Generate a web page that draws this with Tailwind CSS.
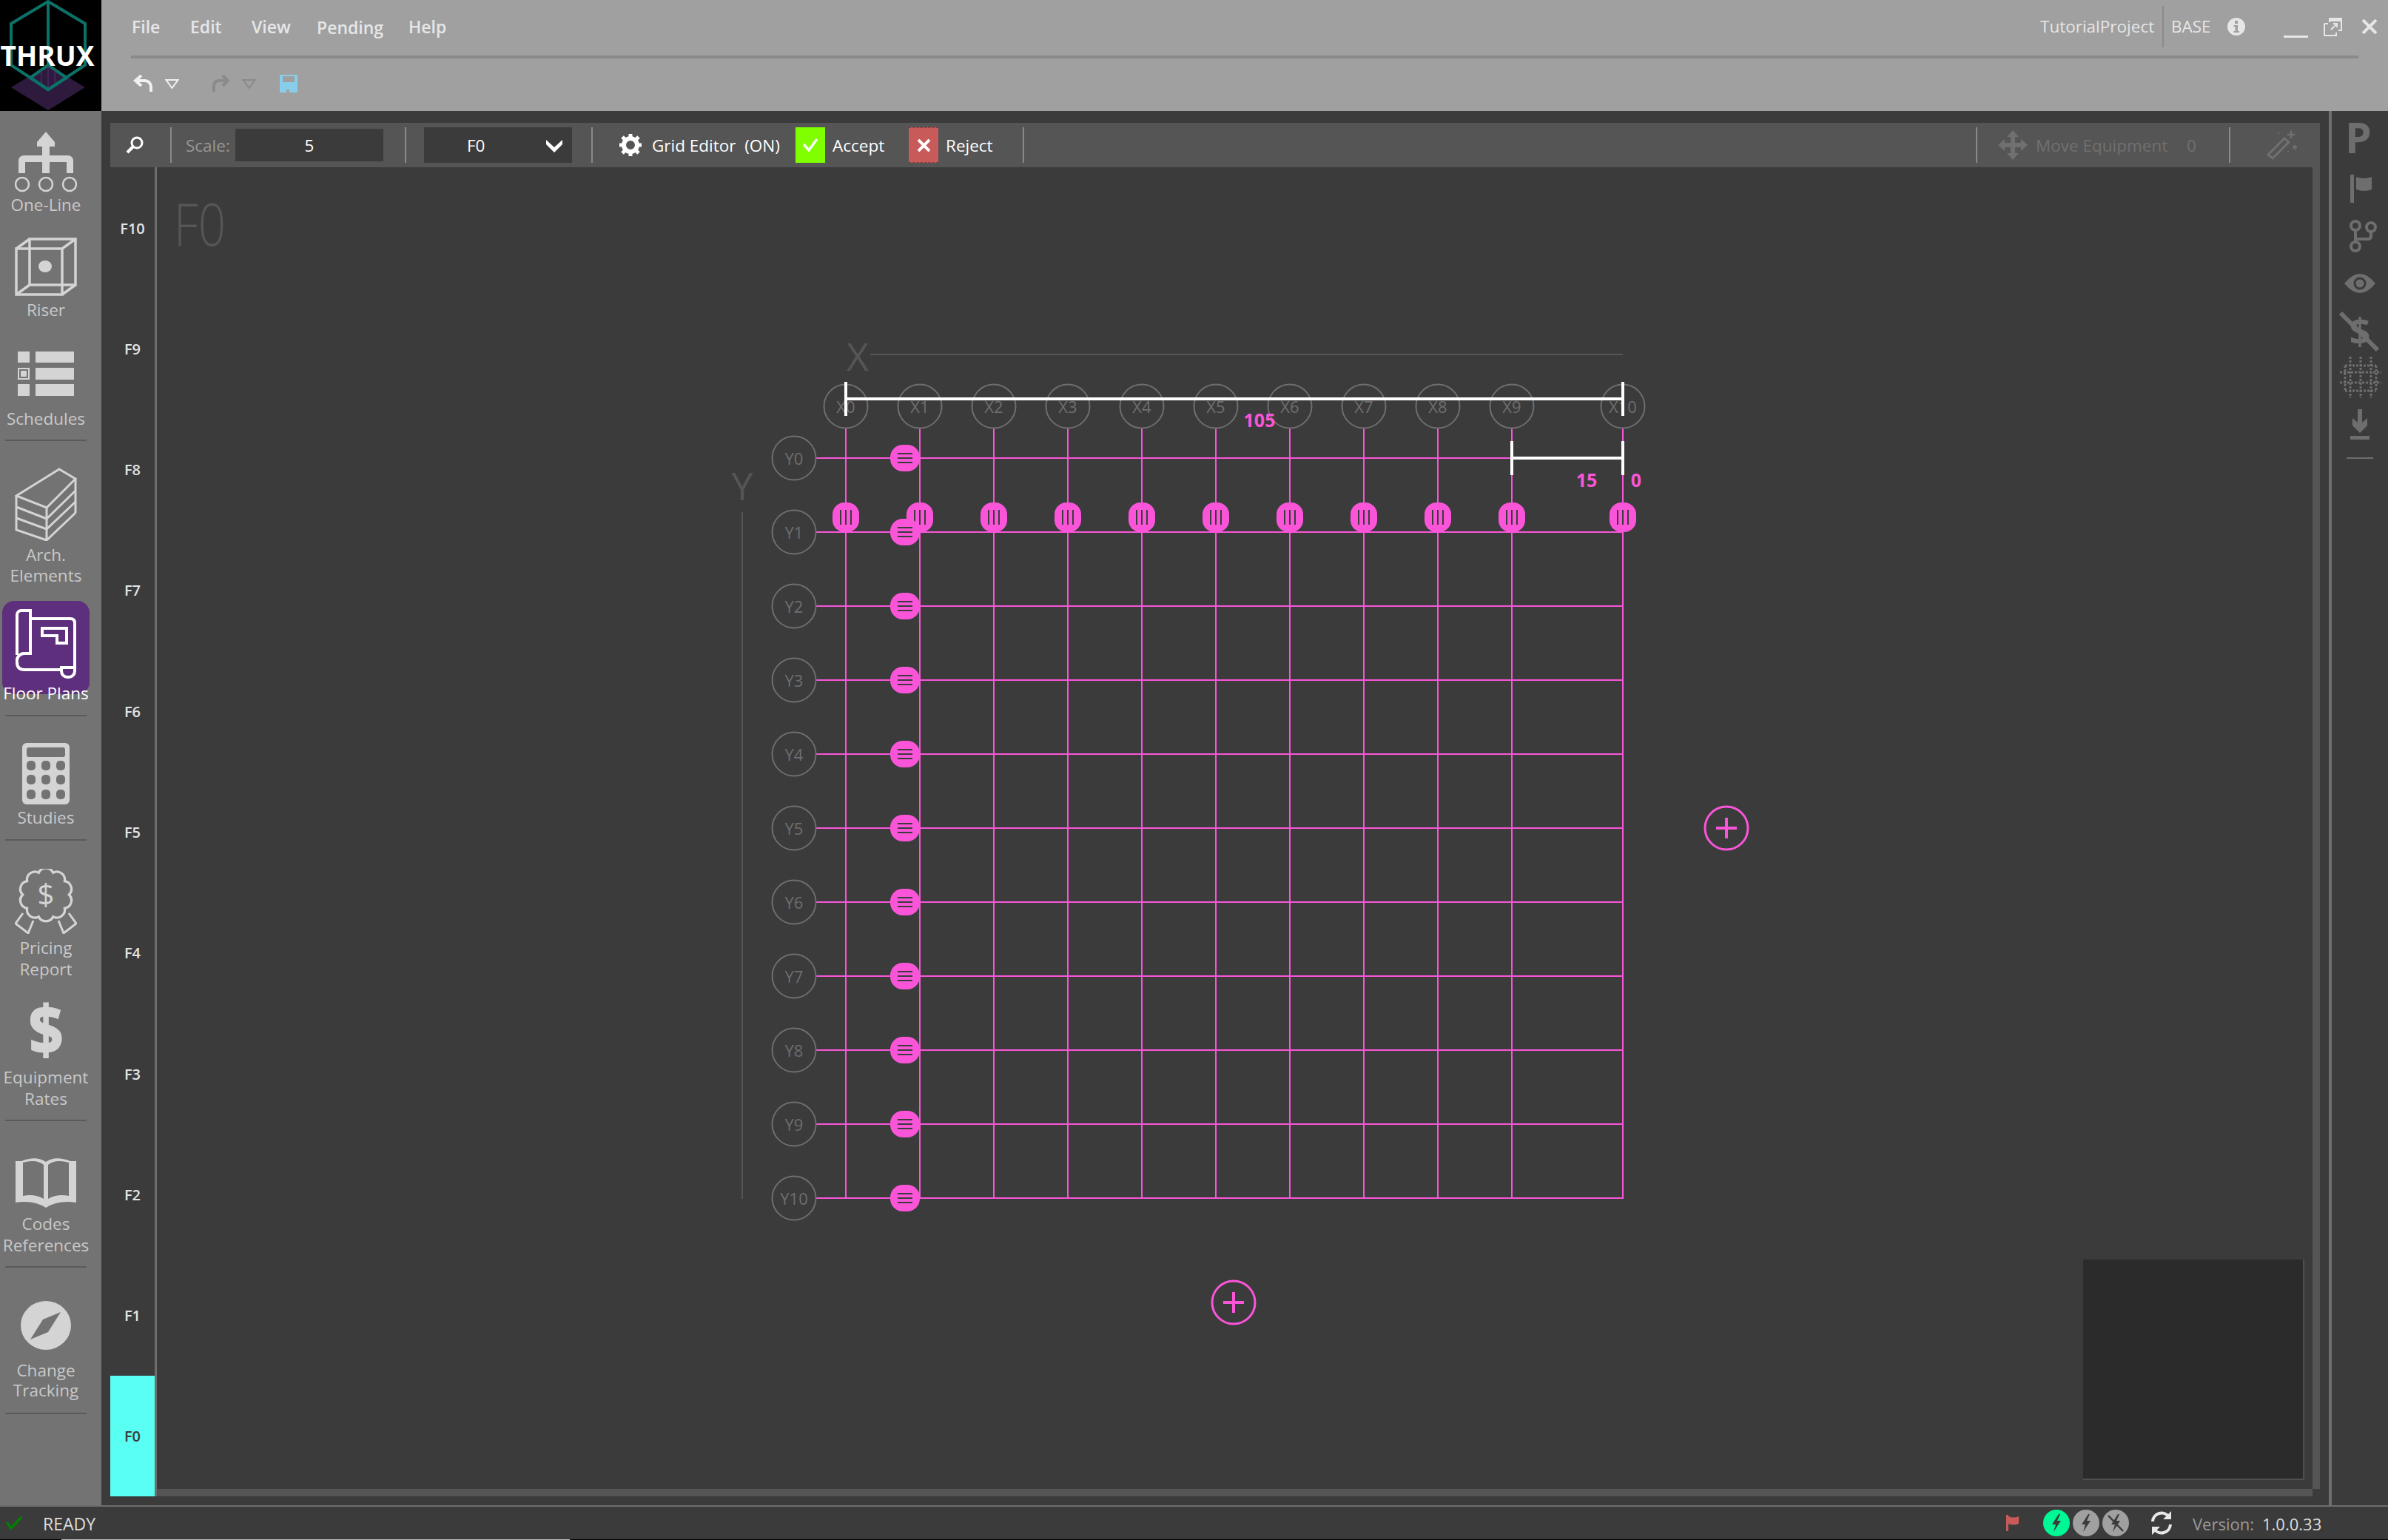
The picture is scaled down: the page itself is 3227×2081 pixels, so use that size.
<!DOCTYPE html>
<html lang="en">

<head>
  <meta charset="UTF-8">
  <title>Thrux - Floor Plans</title>
  <script src="https://cdn.jsdelivr.net/npm/@tailwindcss/browser@4"></script>
</head>

<body class="w-[3227px] h-[2081px] overflow-hidden bg-[#3b3b3b] flex flex-col font-['Open_Sans',sans-serif] text-[22px]">

  <!-- title bar -->
  <header class="h-[150px] flex bg-[#a0a0a0] shrink-0">
    <div class="w-[137px] h-[150px] bg-black relative overflow-hidden shrink-0">
      <svg class="absolute inset-0" width="137" height="150" viewBox="0 0 137 150">
        <polygon points="65,88 115,118 65,149 15,118" fill="#2e1a3d" />
        <g fill="none" stroke="#0b7268" stroke-width="4">
          <polygon points="65,2 115,32 115,88 65,121 15,88 15,32" />
          <line x1="65" y1="2" x2="65" y2="88" />
          <polygon points="65,88 90,105 65,121 41,105" />
        </g>
        <g stroke="#4a2a63" stroke-width="1.5">
          <line x1="56" y1="95" x2="56" y2="112" />
          <line x1="65" y1="90" x2="65" y2="118" />
          <line x1="74" y1="95" x2="74" y2="112" />
        </g>
      </svg>
      <span class="absolute left-0 top-[50px] w-[128px] text-center text-[37px] leading-[50px] font-bold text-white">THRUX</span>
    </div>
    <div class="flex-1 flex flex-col">
      <div class="h-[72px] flex items-center text-[#e6e6e6]">
        <nav class="flex items-center pl-[41px] font-semibold text-[23px]">
          <span class="w-[79px]">File</span>
          <span class="w-[83px]">Edit</span>
          <span class="w-[88px]">View</span>
          <span class="w-[124px] mt-[3px]">Pending</span>
          <span>Help</span>
        </nav>
        <div class="ml-auto flex items-center pr-[14px]">
          <span class="w-[153px] text-[22.5px] whitespace-nowrap">TutorialProject</span>
          <span class="w-[2px] h-[56px] bg-[#8a8a8a] ml-[12px]"></span>
          <span class="w-[53px] ml-[10px] text-[22.5px]">BASE</span>
          <svg class="ml-[23px]" width="24" height="24" viewBox="0 0 24 24">
            <circle cx="12" cy="12" r="12" fill="#e6e6e6" />
            <rect x="10" y="4" width="4" height="4" fill="#a0a0a0" />
            <path d="M8.5 10h5.5v8h2v2H8.5v-2h2v-6h-2z" fill="#a0a0a0" />
          </svg>
          <span class="w-[33px] h-[3px] bg-[#e6e6e6] ml-[52px] mt-[26px]"></span>
          <svg class="ml-[21px]" width="25" height="25" viewBox="0 0 25 25" fill="none" stroke="#e6e6e6" stroke-width="2">
            <path d="M8 1h16v16h-4M8 1v5" />
            <path d="M8 1h16v3H8z" fill="#e6e6e6" />
            <path d="M1 8h5M1 8v16h16v-4M1 8v3" />
            <path d="M10 16l8-8M13 8h5v5" />
          </svg>
          <svg class="ml-[26px]" width="22" height="20" viewBox="0 0 22 20" stroke="#e6e6e6" stroke-width="4">
            <path d="M2 1l18 18M20 1L2 19" />
          </svg>
        </div>
      </div>
      <div class="h-[4px] w-[3010px] ml-[40px] mt-[3px] bg-[#8a8a8a]"></div>
      <div class="flex items-center pl-[43px] mt-[22px]">
        <svg width="27" height="24" viewBox="0 0 27 24" fill="none" stroke="#f0f0f0" stroke-width="4">
          <path d="M4 8h12a8 8 0 0 1 8 8v7" />
          <path d="M11 1L3 8l8 7" />
        </svg>
        <svg class="ml-[16px]" width="19" height="13" viewBox="0 0 19 13" fill="none" stroke="#f0f0f0" stroke-width="2">
          <path d="M1.5 1h16L9.5 12z" />
        </svg>
        <svg class="ml-[45px]" width="23" height="24" viewBox="0 0 23 24" fill="none" stroke="#8a8a8a" stroke-width="4">
          <path d="M20 8H9a7 7 0 0 0-7 8v7" />
          <path d="M14 1l7 7-7 7" />
        </svg>
        <svg class="ml-[17px]" width="19" height="13" viewBox="0 0 19 13" fill="none" stroke="#8a8a8a" stroke-width="2">
          <path d="M1.5 1h16L9.5 12z" />
        </svg>
        <svg class="ml-[32px]" width="24" height="24" viewBox="0 0 24 24">
          <rect width="24" height="24" fill="#87ceeb" />
          <rect x="4" y="2" width="16" height="8" fill="#a0a0a0" />
          <rect x="9" y="20" width="4" height="4" fill="#a0a0a0" />
        </svg>
      </div>
    </div>
  </header>

  <div class="h-[1884px] flex shrink-0">

    <!-- left navigation -->
    <aside class="w-[137px] shrink-0 pr-[13px] bg-[#737373] flex flex-col items-center text-[#c9c9c9] text-[22.5px] text-center leading-[28px]">
      <svg class="mt-[28px] shrink-0" width="84" height="82" viewBox="0 0 84 82" fill="#d4d4d4">
        <path d="M42 0l12 14v6h-7v12h24q8 0 8 8v16H70V41H47v15H37V41H14v15H5V40q0-8 8-8h24V20h-7v-6z" />
        <g fill="none" stroke="#d4d4d4" stroke-width="2.5">
          <circle cx="10" cy="71" r="9" />
          <circle cx="42" cy="71" r="9" />
          <circle cx="74" cy="71" r="9" />
        </g>
      </svg>
      <span class="mt-[3px]">One-Line</span>

      <svg class="mt-[30px] shrink-0" width="84" height="79" viewBox="0 0 84 79" fill="none" stroke="#d4d4d4" stroke-width="3.5">
        <rect x="2" y="15" width="62" height="62" />
        <rect x="20" y="2" width="62" height="62" />
        <path d="M2 15L20 2M64 15L82 2M2 77l18-13M64 77l18-13" />
        <ellipse cx="41" cy="39" rx="9" ry="8" fill="#d4d4d4" stroke="none" />
      </svg>
      <span class="mt-[5px]">Riser</span>

      <svg class="mt-[42px] shrink-0" width="76" height="60" viewBox="0 0 76 60" fill="#d4d4d4">
        <rect width="16" height="15" />
        <rect x="24" width="52" height="15" />
        <rect y="22" width="16" height="16" />
        <rect x="2" y="24" width="12" height="12" fill="#737373" />
        <rect x="4" y="26" width="8" height="8" />
        <rect x="24" y="22" width="52" height="16" />
        <rect y="44" width="16" height="16" />
        <rect x="24" y="44" width="52" height="16" />
      </svg>
      <span class="mt-[17px]">Schedules</span>
      <div class="w-[110px] h-[2px] bg-[#5a5a5a] mt-[14px] shrink-0"></div>

      <svg class="mt-[36px] shrink-0" width="84" height="99" viewBox="0 0 84 99" fill="none" stroke="#d4d4d4" stroke-width="3">
        <path d="M2 38L60 2l22 13-39 39z" />
        <path d="M2 38v46l41 14 39-37" />
        <path d="M2 53l41 16 39-38M2 68l41 15 39-37" />
        <path d="M43 54v44M82 15v16M82 31v15M82 46v15" />
      </svg>
      <span class="mt-[5px]">Arch.<br>Elements</span>

      <div class="w-[118px] h-[126px] mt-[20px] bg-[#5e2f7c] rounded-[16px] flex flex-col items-center pt-[11px] text-white shrink-0">
        <svg class="shrink-0" width="82" height="95" viewBox="0 0 82 95" fill="none" stroke="#fff" stroke-width="4">
          <path d="M2 62V8a6 6 0 0 1 6-6h12v58H12a10 10 0 0 0-10 12q0 10 10 10h50" />
          <path d="M20 13h54q6 0 6 6v60" />
          <path d="M36 26h33v20H56v-10H36z" />
          <path d="M80 79H62v5a8 8 0 0 0 8 8h2a8 8 0 0 0 8-8z" />
        </svg>
        <span class="mt-[5px] shrink-0 whitespace-nowrap">Floor Plans</span>
      </div>
      <div class="w-[110px] h-[2px] bg-[#5a5a5a] mt-[28px] shrink-0"></div>

      <svg class="mt-[36px] shrink-0" width="64" height="83" viewBox="0 0 64 83">
        <rect width="64" height="83" rx="6" fill="#d4d4d4" />
        <g fill="#737373">
          <rect x="6" y="6" width="52" height="13" rx="3" />
          <rect x="6" y="24" width="12" height="13" rx="5" />
          <rect x="26" y="24" width="12" height="13" rx="5" />
          <rect x="46" y="24" width="12" height="13" rx="5" />
          <rect x="6" y="43" width="12" height="13" rx="5" />
          <rect x="26" y="43" width="12" height="13" rx="5" />
          <rect x="46" y="43" width="12" height="13" rx="5" />
          <rect x="6" y="63" width="12" height="13" rx="5" />
          <rect x="26" y="63" width="12" height="13" rx="5" />
          <rect x="46" y="63" width="12" height="13" rx="5" />
        </g>
      </svg>
      <span class="mt-[4px]">Studies</span>
      <div class="w-[110px] h-[2px] bg-[#5a5a5a] mt-[15px] shrink-0"></div>

      <svg class="mt-[38px] shrink-0" width="84" height="88" viewBox="0 0 84 88" fill="none" stroke="#d4d4d4" stroke-width="3">
        <path transform="translate(42 35) scale(1.08) translate(-42 -35)" d="M71 35A10 10 0 0 1 65.5 52A10 10 0 0 1 51 62.6A10 10 0 0 1 33 62.6A10 10 0 0 1 18.5 52A10 10 0 0 1 13 35A10 10 0 0 1 18.5 18A10 10 0 0 1 33 7.400A10 10 0 0 1 51 7.400A10 10 0 0 1 65.500 18A10 10 0 0 1 71 35Z" />
        <path d="M11 60L1 74l17 13 7-17M73 60l10 14-17 13-7-17" />
        <text x="42" y="49" text-anchor="middle" font-size="40" fill="#d4d4d4" stroke="none">$</text>
      </svg>
      <span class="mt-[4px] leading-[29px]">Pricing<br>Report</span>

      <svg class="mt-[30px] shrink-0 overflow-visible" width="60" height="83" viewBox="0 0 60 83">
        <text transform="translate(30 71) scale(.88 1)" text-anchor="middle" font-size="92" font-weight="800" fill="#d4d4d4">$</text>
      </svg>
      <span class="mt-[4px] leading-[29px]">Equipment<br>Rates</span>
      <div class="w-[110px] h-[2px] bg-[#5a5a5a] mt-[14px] shrink-0"></div>

      <svg class="mt-[48px] shrink-0" width="82" height="69" viewBox="0 0 82 69">
        <path d="M0 6h8Q28-2 41 7Q54-2 74 6h8v56Q58 58 41 69Q24 58 0 62z" fill="#d4d4d4" />
        <path d="M10 8q18-5 28 3v46Q26 50 10 53zM72 8Q54 3 44 11v46q12-7 28-4z" fill="#737373" />
      </svg>
      <span class="mt-[7px] leading-[29px]">Codes<br>References</span>
      <div class="w-[110px] h-[2px] bg-[#5a5a5a] mt-[14px] shrink-0"></div>

      <svg class="mt-[45px] shrink-0" width="68" height="66" viewBox="0 0 68 66">
        <ellipse cx="34" cy="33" rx="34" ry="33" fill="#d4d4d4" />
        <polygon points="13,52 30,25 54,15 37,42" fill="#737373" />
      </svg>
      <span class="mt-[14px] leading-[27px]">Change<br>Tracking</span>
      <div class="w-[110px] h-[2px] bg-[#5a5a5a] mt-[17px] shrink-0"></div>
    </aside>

    <!-- editor -->
    <main class="w-[3010px] shrink-0 pl-[12px] pr-[12px] pt-[16px] pb-[12px] flex flex-col">
      <div class="h-[60px] w-[2986px] shrink-0 bg-[#555555] flex items-center text-white text-[22.5px]">
        <svg class="ml-[21px]" width="24" height="24" viewBox="0 0 24 24" fill="none" stroke="#fff">
          <circle cx="15" cy="9" r="7" stroke-width="3" />
          <path d="M10 14l-8 8" stroke-width="4" />
        </svg>
        <span class="w-[2px] h-[48px] bg-[#8a8a8a] ml-[36px]"></span>
        <span class="w-[59px] ml-[19px] mt-[2px] text-[#979797] whitespace-nowrap">Scale:</span>
        <div class="w-[200px] h-[44px] ml-[8px] pt-[2px] bg-[#3b3b3b] flex items-center justify-center">5</div>
        <span class="w-[2px] h-[48px] bg-[#8a8a8a] ml-[29px]"></span>
        <div class="w-[200px] h-[48px] ml-[24px] pt-[2px] bg-[#3b3b3b] flex items-center relative">
          <span class="ml-[58px]">F0</span>
          <svg class="absolute left-[165px] top-[17px]" width="22" height="17" viewBox="0 0 22 17" fill="#fff">
            <path d="M0 0l11 10L22 0v6L11 17 0 6z" />
          </svg>
        </div>
        <span class="w-[2px] h-[48px] bg-[#8a8a8a] ml-[26px]"></span>
        <svg class="ml-[36px]" width="30" height="30" viewBox="0 0 30 30" fill="#fff">
          <circle cx="15" cy="15" r="9" fill="none" stroke="#fff" stroke-width="6" />
          <g stroke="#fff" stroke-width="5">
            <path d="M15 0v6M15 24v6M0 15h6M24 15h6M4 4l4 4M22 22l4 4M26 4l-4 4M8 22l-4 4" />
          </g>
        </svg>
        <span class="w-[174px] ml-[14px] mt-[2px] whitespace-pre">Grid Editor  (ON)</span>
        <div class="w-[40px] h-[48px] ml-[20px] bg-[#7fff00] flex items-center justify-center">
          <svg width="20" height="18" viewBox="0 0 20 18" fill="none" stroke="#fff" stroke-width="3.500">
            <path d="M1 8l7 8L19 1" />
          </svg>
        </div>
        <span class="w-[72px] ml-[10px] mt-[2px]">Accept</span>
        <div class="w-[40px] h-[48px] ml-[31px] bg-[#c85a5a] flex items-center justify-center border-y border-dashed border-[#8f3a3a]">
          <svg width="17" height="17" viewBox="0 0 17 17" stroke="#fff" stroke-width="4">
            <path d="M1 1l15 15M16 1L1 16" />
          </svg>
        </div>
        <span class="w-[63px] ml-[10px] mt-[2px]">Reject</span>
        <span class="w-[2px] h-[48px] bg-[#8a8a8a] ml-[41px]"></span>

        <span class="w-[2px] h-[48px] bg-[#8a8a8a] ml-auto"></span>
        <svg class="ml-[28px]" width="40" height="40" viewBox="0 0 40 40" fill="#707070">
          <path d="M20 0l8 9h-5v8h8v-5l9 8-9 8v-5h-8v8h5l-8 9-8-9h5v-8H9v5l-9-8 9-8v5h8V9h-5z" />
        </svg>
        <span class="w-[180px] ml-[11px] mt-[2px] text-[#707070] whitespace-nowrap">Move Equipment</span>
        <span class="w-[12px] ml-[24px] mt-[2px] text-[#707070]">0</span>
        <span class="w-[2px] h-[48px] bg-[#8a8a8a] ml-[45px]"></span>
        <svg class="ml-[49px] mr-[30px]" width="42" height="40" viewBox="0 0 42 40" fill="none" stroke="#707070">
          <path d="M2 33L24 11l6 5L8 38z" stroke-width="3" />
          <path d="M33 1v10M28 6h10M38 20v6M35 23h6" stroke-width="2.500" />
          <path d="M16 3v2M29 28v2" stroke-width="2" />
        </svg>
      </div>

      <div class="h-[1796px] flex">
        <!-- floors -->
        <div class="w-[60px] shrink-0 grid grid-rows-11 text-[#e4e4e4] text-[20px] font-semibold text-center">
          <div class="flex items-center justify-center pt-[2px]">F10</div>
          <div class="flex items-center justify-center pt-[2px]">F9</div>
          <div class="flex items-center justify-center pt-[2px]">F8</div>
          <div class="flex items-center justify-center pt-[2px]">F7</div>
          <div class="flex items-center justify-center pt-[2px]">F6</div>
          <div class="flex items-center justify-center pt-[2px]">F5</div>
          <div class="flex items-center justify-center pt-[2px]">F4</div>
          <div class="flex items-center justify-center pt-[2px]">F3</div>
          <div class="flex items-center justify-center pt-[2px]">F2</div>
          <div class="flex items-center justify-center pt-[2px]">F1</div>
          <div class="flex items-center justify-center pt-[2px] bg-[#5afff4] text-[#3b3b3b]">F0</div>
        </div>
        <div class="w-[3px] shrink-0 bg-[#6e6e6e]"></div>

        <div class="flex-1 flex flex-col">
          <div class="h-[1786px] flex">
            <div class="w-[2913px] h-[1786px] relative overflow-hidden">
              <svg id="plan" class="absolute inset-0" width="2913" height="1786" viewBox="212 226 2913 1786"></svg>
              <div class="absolute right-[11px] bottom-[12px] w-[299px] h-[298px] bg-[#2b2b2b] border-b-2 border-r-2 border-[#4f4f4f]"></div>
            </div>
            <div class="w-[10px] bg-[#555555]"></div>
          </div>
          <div class="h-[10px] w-[2913px] bg-[#555555]"></div>
        </div>
      </div>
    </main>

    <div class="w-[4px] shrink-0 bg-[#6e6e6e]"></div>

    <!-- right tools -->
    <aside class="w-[76px] shrink-0 flex flex-col">
      <svg class="mt-[16px] overflow-visible" width="76" height="41" viewBox="0 0 76 41">
        <text x="18" y="41" font-size="57" font-weight="700" fill="#6e6e6e">P</text>
      </svg>
      <svg class="mt-[29px]" width="76" height="38" viewBox="0 0 76 38" fill="#6e6e6e">
        <rect x="25" width="5" height="38" />
        <path d="M33 3q10 4 21 0v17q-10 4-21 0z" />
      </svg>
      <svg class="mt-[23px]" width="76" height="44" viewBox="0 0 76 44" fill="none" stroke="#6e6e6e" stroke-width="4">
        <circle cx="32" cy="8" r="6" />
        <circle cx="32" cy="36" r="6" />
        <circle cx="53" cy="10" r="6" />
        <path d="M32 14v16M53 16v6q0 4-4 4H32" />
      </svg>
      <svg class="mt-[29px]" width="76" height="26" viewBox="0 0 76 26">
        <path d="M17 13Q38-13 59 13Q38 39 17 13z" fill="#6e6e6e" />
        <circle cx="38" cy="13" r="7" fill="none" stroke="#3b3b3b" stroke-width="3" />
      </svg>
      <svg class="mt-[24px] overflow-visible" width="76" height="55" viewBox="0 0 76 55">
        <text x="38" y="46" text-anchor="middle" font-size="50" font-weight="700" fill="#6e6e6e">$</text>
        <path d="M12 3l50 50" stroke="#6e6e6e" stroke-width="6" />
      </svg>
      <svg class="mt-[7px]" width="76" height="56" viewBox="0 0 76 56" fill="none" stroke="#6e6e6e" stroke-width="3" stroke-dasharray="3 2">
        <path d="M11 21h56M11 35h56M18 12h42M18 46h42M25 0v56M39 0v56M53 0v56M18 12v34M60 12v34" />
      </svg>
      <svg class="mt-[15px]" width="76" height="41" viewBox="0 0 76 41" fill="#6e6e6e">
        <path d="M35 0h6v18l7-6v10L38 32 28 22V12l7 6z" />
        <rect x="25" y="36" width="26" height="5" />
      </svg>
      <div class="w-[36px] h-[2px] bg-[#6e6e6e] mt-[24px] ml-[20px]"></div>
    </aside>
  </div>

  <!-- status bar -->
  <footer class="h-[46px] shrink-0 border-t-2 border-[#6e6e6e] flex items-center text-[22px]">
    <svg class="ml-[8px]" width="22" height="18" viewBox="0 0 22 18" fill="none" stroke="#008000" stroke-width="3.500">
      <path d="M1 8l6 8L21 1" />
    </svg>
    <span class="w-[72px] ml-[28px] mt-[2px] text-[#dddddd] text-[23px]">READY</span>
    <svg class="ml-[2581px]" width="17" height="22" viewBox="0 0 17 22" fill="#c85a5a">
      <rect width="3" height="22" />
      <path d="M3 2q7 3 14 0v10q-7 3-14 0z" />
    </svg>
    <svg class="ml-[33px]" width="118" height="36" viewBox="0 0 118 36">
      <ellipse cx="18" cy="18" rx="18" ry="18" fill="#00f795" />
      <ellipse cx="58" cy="18" rx="18" ry="18" fill="#a0a0a0" />
      <ellipse cx="98" cy="18" rx="18" ry="18" fill="#a0a0a0" />
      <path d="M21 6l-9 14h5l-3 10 10-15h-5l4-9z" fill="#3b3b3b" />
      <path d="M61 6l-9 14h5l-3 10 10-15h-5l4-9z" fill="#3b3b3b" />
      <path d="M101 6l-9 14h5l-3 10 10-15h-5l4-9z" fill="#3b3b3b" />
      <path d="M88 8l20 21" stroke="#3b3b3b" stroke-width="2.500" />
    </svg>
    <svg class="ml-[27px]" width="30" height="34" viewBox="0 0 30 34" fill="none" stroke="#e8e8e8" stroke-width="4">
      <path d="M3 15a12 12 0 0 1 22-6M27 19a12 12 0 0 1-22 6" />
      <path d="M28 1v11H17zM2 33V22h11z" fill="#e8e8e8" stroke="none" />
    </svg>
    <span class="w-[83px] ml-[27px] mt-[2px] text-[#9a9a9a] whitespace-nowrap">Version:</span>
    <span class="ml-[11px] mt-[2px] text-[#dddddd] whitespace-nowrap">1.0.0.33</span>
  </footer>
  <div class="h-[1px] bg-black shrink-0 flex">
    <div class="ml-[83px] w-[687px] bg-[#bbbbbb]"></div>
  </div>

  <script>
    const pink = '#fa55d9', ringColor = '#6e6e6e', dark = '#3b3b3b', faint = '#555555';
    const xs = [1143, 1243, 1343, 1443, 1543, 1643, 1743, 1843, 1943, 2043, 2193];
    const ys = [619, 719, 819, 919, 1019, 1119, 1219, 1319, 1419, 1519, 1619];
    let out = '';

    const line = (x1, y1, x2, y2, color, w) =>
      `<line x1="${x1}" y1="${y1}" x2="${x2}" y2="${y2}" stroke="${color}" stroke-width="${w}"/>`;
    const text = (x, y, str, size, color, bold) =>
      `<text x="${x}" y="${y}" text-anchor="middle" font-size="${size}" fill="${color}" ${bold ? 'font-weight="700"' : ''}>${str}</text>`;
    const ring = (x, y, label) =>
      `<circle cx="${x}" cy="${y}" r="29.5" fill="none" stroke="${ringColor}" stroke-width="2"/>` +
      text(x, y + 9, label, 22, ringColor);
    const plus = (x, y) =>
      `<circle cx="${x}" cy="${y}" r="29" fill="none" stroke="${pink}" stroke-width="3"/>` +
      line(x - 14, y, x + 14, y, pink, 4) + line(x, y - 14, x, y + 14, pink, 4);

    // axis titles
    out += `<text transform="translate(270 332) scale(.82 1)" text-anchor="middle" font-size="80" font-weight="300" fill="#565656">F0</text>`;
    out += text(1159, 501, 'X', 52, faint);
    out += line(1176, 479, 2193, 479, faint, 2);
    out += text(1003, 676, 'Y', 52, faint);
    out += line(1003, 692, 1003, 1620, faint, 2);

    // grid lines
    xs.forEach((x) => { out += line(x, 579, x, 1620, pink, 2); });
    ys.forEach((y) => { out += line(1103, y, 2194, y, pink, 2); });

    xs.forEach((x, i) => { out += ring(x, 549, 'X' + i); });
    ys.forEach((y, i) => { out += ring(1073, y, 'Y' + i); });

    // drag handles
    xs.forEach((x) => {
      out += `<rect x="${x - 18}" y="679" width="36" height="40" rx="16" fill="${pink}"/>`;
      [-7, 0, 7].forEach((d) => { out += line(x + d, 689, x + d, 709, dark, 2); });
    });
    ys.forEach((y) => {
      out += `<rect x="1203" y="${y - 18}" width="40" height="36" rx="17" fill="${pink}"/>`;
      [-6, 0, 6].forEach((d) => { out += line(1213, y + d, 1233, y + d, dark, 2); });
    });

    // dimensions
    out += line(1143, 539, 2193, 539, '#fff', 4) + line(1143, 516, 1143, 562, '#fff', 4) + line(2193, 516, 2193, 562, '#fff', 4);
    out += line(2043, 619, 2193, 619, '#fff', 4) + line(2043, 596, 2043, 642, '#fff', 4) + line(2193, 596, 2193, 642, '#fff', 4);
    out += text(1702, 577, '105', 25, pink, true);
    out += text(2144, 658, '15', 25, pink, true);
    out += text(2211, 658, '0', 25, pink, true);

    out += plus(2333, 1119) + plus(1667, 1760);

    document.getElementById('plan').innerHTML = out;
  </script>
</body>

</html>
